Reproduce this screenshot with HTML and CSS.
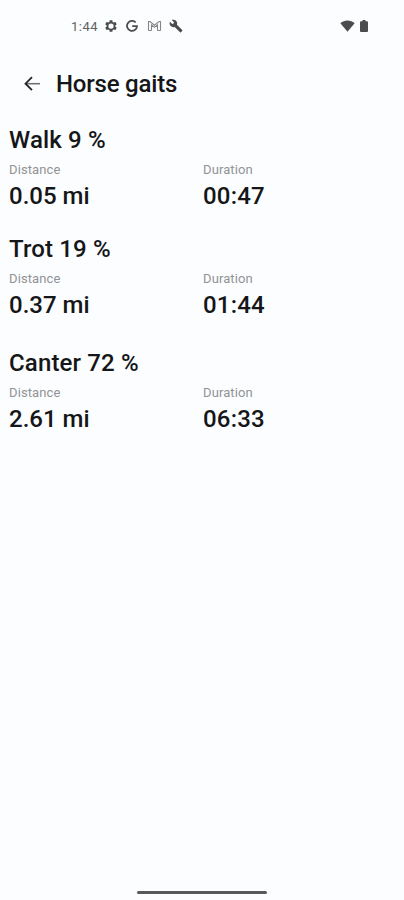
FILE: index.html
```html
<!DOCTYPE html>
<html lang="en">
<head>
    <meta charset="UTF-8">
    <meta name="viewport" content="width=device-width, initial-scale=1.0">
    <title>Horse gaits</title>
    <link rel="stylesheet" href="styles.css">
</head>
<body>
    <div class="status-bar">
        <span class="time">1:44</span>
        <!-- settings -->
        <svg class="icon-gear" width="14" height="14" viewBox="0 0 24 24">
            <path fill-rule="evenodd" d="M19.4 13c.1-.3.1-.7.1-1s0-.7-.1-1l2.1-1.7c.2-.1.3-.4.1-.6l-2-3.5c-.1-.2-.4-.3-.6-.2l-2.5 1c-.5-.4-1.1-.7-1.7-1l-.4-2.6c0-.3-.2-.4-.4-.4h-4c-.2 0-.4.1-.4.4L9.200 5c-.6.300-1.200.6-1.700 1L5 5c-.2-.1-.5 0-.6.200l-2 3.500c-.1.200-.1.500.1.600L4.600 11c-.1.300-.1.700-.1 1s0 .7.100 1l-2.100 1.700c-.2.100-.2.400-.1.600l2 3.500c.1.200.4.300.6.200l2.500-1c.5.400 1.100.7 1.700 1l.4 2.600c0 .300.200.400.400.400h4c.200 0 .400-.1.400-.4l.4-2.600c.6-.3 1.200-.6 1.700-1l2.500 1c.2.100.500 0 .6-.2l2-3.500c.1-.2.1-.5-.1-.6zM12 16.500a4.500 4.500 0 1 1 0-9 4.500 4.500 0 0 1 0 9z"/>
        </svg>
        <!-- google -->
        <svg class="icon-google" width="12" height="12" viewBox="0 0 12 12">
            <path d="M9.700 2.500A5 5 0 1 0 11 6.200H6.200"/>
        </svg>
        <!-- mail -->
        <svg class="icon-mail" width="15" height="12" viewBox="0 0 15 12">
            <path d="M1.500 10.500V1.500h1.500l4.500 3.700 4.500-3.700h1.500v9M4.500 10.500V5l3 2.400 3-2.400v5.500M1.500 10.500h3M10.500 10.500h3"/>
        </svg>
        <!-- wrench -->
        <svg class="icon-wrench" width="14" height="14" viewBox="0 0 24 24">
            <path d="M22.700 19l-9.100-9.100c.9-2.300.4-5-1.500-6.900-2-2-5-2.400-7.400-1.300L9 6 6 9 1.600 4.700C.4 7.100.9 10.100 2.900 12.100c1.900 1.900 4.600 2.400 6.900 1.500l9.100 9.100c.4.400 1 .4 1.400 0l2.300-2.300c.5-.4.5-1.100.1-1.400z"/>
        </svg>
        <svg class="icon-wifi" width="15" height="12" viewBox="0 0 15 12">
            <path d="M7.500 11.700L.4 3.300C4.500-.4 10.500-.4 14.600 3.300z"/>
        </svg>
        <svg class="icon-battery" width="8" height="12" viewBox="0 0 8 12">
            <path d="M2.500 0h3v1.300H7q1 0 1 1V11q0 1-1 1H1q-1 0-1-1V2.300q0-1 1-1h1.500z"/>
        </svg>
    </div>

    <div class="header">
        <svg class="icon-back" width="17" height="16" viewBox="0 0 17 16">
            <path class="arrow-line" d="M1.500 7.700H16"/>
            <path class="arrow-head" d="M8 1.200L1.500 7.700 8 14.200"/>
        </svg>
        <h1>Horse gaits</h1>
    </div>

    <div class="gaits">
        <div class="gait">
            <h2>Walk 9 %</h2>
            <div class="stats">
                <div class="stat">
                    <div class="label">Distance</div>
                    <div class="value">0.05 mi</div>
                </div>
                <div class="stat">
                    <div class="label">Duration</div>
                    <div class="value time-value">00:47</div>
                </div>
            </div>
        </div>
        <div class="gait">
            <h2>Trot 19 %</h2>
            <div class="stats">
                <div class="stat">
                    <div class="label">Distance</div>
                    <div class="value">0.37 mi</div>
                </div>
                <div class="stat">
                    <div class="label">Duration</div>
                    <div class="value time-value">01:44</div>
                </div>
            </div>
        </div>
        <div class="gait gait-last">
            <h2>Canter 72 %</h2>
            <div class="stats">
                <div class="stat">
                    <div class="label">Distance</div>
                    <div class="value">2.61 mi</div>
                </div>
                <div class="stat">
                    <div class="label">Duration</div>
                    <div class="value time-value">06:33</div>
                </div>
            </div>
        </div>
    </div>

    <div class="home-bar"></div>
</body>
</html>
```
FILE: styles.css
```css
body {
    font-family: Roboto, sans-serif;
    background-color: #fbfdff;
    color: #151617;
    margin: 0;
    padding: 0;
    height: 900px;
    display: flex;
    flex-direction: column;
    overflow: hidden;
}

svg {
    display: block;
    flex: none;
    fill: #4b4c4d;
}

.status-bar {
    display: flex;
    align-items: center;
    height: 52px;
    padding: 0 36px 0 71px;
}

.time {
    font-size: 13px;
    width: 33px;
    letter-spacing: 0.5px;
    color: #606162;
}

.icon-google {
    margin-left: 8px;
    fill: none;
    stroke: #4b4c4d;
    stroke-width: 1.8;
}

.icon-mail {
    margin-left: 9px;
    fill: none;
    stroke: #858687;
    stroke-width: 1.1;
}

.icon-wrench {
    margin-left: 7px;
}

.icon-wifi {
    margin-left: auto;
}

.icon-battery {
    margin-left: 5px;
}

.header {
    display: flex;
    align-items: center;
    height: 64px;
    padding-left: 24px;
}

.icon-back {
    fill: none;
}

.arrow-head {
    stroke: #252627;
    stroke-width: 1.8;
}

.arrow-line {
    stroke: #707172;
    stroke-width: 1.6;
}

h1 {
    font-size: 24px;
    font-weight: 500;
    line-height: 28px;
    letter-spacing: -0.2px;
    margin: 0 0 0 15px;
}

.gaits {
    padding: 10px 0 0 9px;
}

.gait {
    margin-bottom: 25px;
}

.gait-last {
    margin-top: 30px;
}

h2 {
    font-size: 24px;
    font-weight: 500;
    line-height: 28px;
    letter-spacing: 0.15px;
    margin: 0 0 8px;
}

.stats {
    display: flex;
}

.stat {
    flex: none;
    width: 194px;
}

.label {
    font-size: 13px;
    line-height: 16px;
    letter-spacing: 0.1px;
    color: #929394;
}

.value {
    font-size: 24px;
    font-weight: 500;
    line-height: 28px;
    margin-top: 4px;
}

.time-value {
    letter-spacing: 0.2px;
}

.home-bar {
    width: 130px;
    height: 3px;
    margin: auto auto 6px;
    border-radius: 2px;
    background-color: #58595a;
}
```
